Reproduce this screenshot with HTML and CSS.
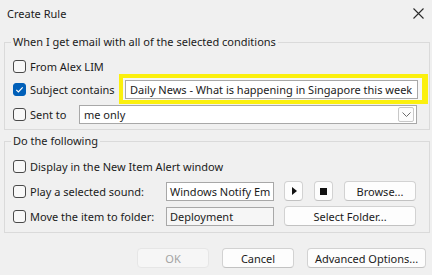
FILE: index.html
```html
<!DOCTYPE html>
<html>

<head>
	<meta charset="utf-8" />
	<title>Create Rule</title>
	<link rel="stylesheet" href="styles.css">
</head>

<body>
	<div class="titlebar">
		<span class="title">Create Rule</span>
		<svg class="close" width="11" height="11" viewBox="0 0 11 11">
			<path d="M0.5 0.5 L10.5 10.5 M10.5 0.5 L0.5 10.5" stroke="#2b2b2b" stroke-width="1.1" fill="none" />
		</svg>
	</div>

	<fieldset class="group group-cond">
		<legend>When I get email with all of the selected conditions</legend>
		<div class="row row-a">
			<label class="check"><span class="box"></span>From Alex LIM</label>
		</div>
		<div class="row row-b">
			<label class="check"><span class="box checked">
				<svg width="13" height="13" viewBox="0 0 13 13"><path d="M3.3 6.8 L5.4 8.9 L9.7 4.4" stroke="#fff" stroke-width="1.2" fill="none" /></svg>
			</span>Subject contains</label>
			<span class="highlight">
				<span class="textbox subject">Daily News - What is happening in Singapore this week</span>
			</span>
		</div>
		<div class="row row-c">
			<label class="check sent"><span class="box"></span>Sent to</label>
			<span class="combo">
				<span class="combo-text">me only</span>
				<span class="combo-btn">
					<svg width="9" height="5" viewBox="0 0 9 5"><path d="M0.5 0.5 L4.5 4.5 L8.5 0.5" stroke="#6b6b6b" stroke-width="1" fill="none" /></svg>
				</span>
			</span>
		</div>
	</fieldset>

	<fieldset class="group group-do">
		<legend>Do the following</legend>
		<div class="row row-a">
			<label class="check"><span class="box"></span>Display in the New Item Alert window</label>
		</div>
		<div class="row row-d">
			<label class="check wide"><span class="box"></span>Play a selected sound:</label>
			<span class="textbox field">Windows Notify Em</span>
			<span class="button small"><span class="play"></span></span>
			<span class="button small"><span class="stop"></span></span>
			<span class="button browse">Browse...</span>
		</div>
		<div class="row row-e">
			<label class="check wide"><span class="box"></span>Move the item to folder:</label>
			<span class="textbox field readonly">Deployment</span>
			<span class="button folder">Select Folder...</span>
		</div>
	</fieldset>

	<div class="footer">
		<span class="button footbtn disabled">OK</span>
		<span class="button footbtn">Cancel</span>
		<span class="button advanced">Advanced Options...</span>
	</div>
</body>

</html>
```

FILE: styles.css
```css
body {
	margin: 0;
	width: 432px;
	height: 275px;
	overflow: hidden;
	background: #f0f0f0;
	color: #1b1b1b;
	font-family: "Noto Sans", "Open Sans", sans-serif;
	font-size: 11px;
}

.titlebar {
	height: 26px;
	display: flex;
	align-items: center;
	justify-content: space-between;
	padding: 0 8px 0 7px;
}

.title {
	font-size: 11px;
}

.close {
	display: block;
	margin-top: 1px;
}

/* group boxes */

.group {
	box-sizing: border-box;
	width: 426px;
	margin: 0 0 0 4px;
	padding: 0 0 4px 8px;
	border: 1px solid #dadada;
	min-width: 0;
}

.group-cond {
	margin-top: 8px;
	padding-top: 5px;
}

.group-do {
	margin-top: 3px;
	padding-top: 6px;
}

.group legend {
	margin-left: -2px;
	padding: 0 2px;
	line-height: 16px;
}

.row {
	display: flex;
	align-items: center;
	height: 22px;
}

.row-b {
	height: 24px;
}

.row-c {
	margin-top: 2px;
}

.row-d {
	margin-top: 2px;
	height: 24px;
}

.row-e {
	margin-top: 1px;
	height: 24px;
}

/* checkboxes */

.check {
	display: flex;
	align-items: center;
	gap: 4px;
	white-space: nowrap;
}

.check.sent {
	width: 66px;
}

.check.wide {
	width: 153px;
}

.row-b .check {
	width: 106px;
}

.box {
	box-sizing: border-box;
	display: block;
	width: 13px;
	height: 13px;
	border: 1px solid #4a4a4a;
	border-radius: 3px;
	background: #f8f8f8;
}

.box.checked {
	border-color: #005fb8;
	background: #005fb8;
}

.box.checked svg {
	display: block;
	margin: -1px;
}

/* text fields */

.highlight {
	box-sizing: border-box;
	display: flex;
	width: 309px;
	height: 30px;
	margin: -3px 0;
	padding: 2px 4px 1px 2px;
	border: 4px solid #fbf00e;
	border-right-width: 6px;
	background: #f7f7f7;
}

.textbox {
	box-sizing: border-box;
	display: block;
	height: 19px;
	line-height: 17px;
	padding: 0 4px;
	border: 1px solid #a8a8a8;
	background: #fff;
	white-space: nowrap;
	overflow: hidden;
}

.subject {
	width: 293px;
}

.field {
	width: 108px;
	padding-left: 3px;
}

.readonly {
	background: #f6f6f6;
}

.combo {
	box-sizing: border-box;
	display: flex;
	align-items: center;
	justify-content: space-between;
	width: 338px;
	height: 19px;
	padding: 0 2px 0 4px;
	border: 1px solid #a8a8a8;
	background: #fff;
}

.combo-btn {
	box-sizing: border-box;
	display: flex;
	align-items: center;
	justify-content: center;
	width: 16px;
	height: 15px;
	border: 1px solid #c8c8c8;
	border-radius: 2px;
	background: #fcfcfc;
}

.combo-btn svg {
	display: block;
}

/* buttons */

.button {
	box-sizing: border-box;
	display: flex;
	align-items: center;
	justify-content: center;
	height: 20px;
	border: 1px solid #d2d2d2;
	border-bottom-color: #c2c2c2;
	border-radius: 4px;
	background: #fdfdfd;
	white-space: nowrap;
}

.button.small {
	width: 19px;
	margin-left: 10px;
}

.button.small + .button.small {
	margin-left: 11px;
}

.browse {
	width: 72px;
	margin-left: 11px;
}

.folder {
	width: 132px;
	margin-left: 10px;
}

.play {
	width: 0;
	height: 0;
	border-top: 4px solid transparent;
	border-bottom: 4px solid transparent;
	border-left: 5px solid #111;
	margin-left: 1px;
}

.stop {
	width: 7px;
	height: 7px;
	background: #111;
}

.footer {
	display: flex;
	justify-content: flex-end;
	gap: 13px;
	margin-top: 15px;
	padding-right: 6px;
}

.footbtn {
	width: 72px;
}

.advanced {
	width: 119px;
}

.disabled {
	color: #a3a3a3;
	background: #f6f6f6;
	border-color: #e6e6e6;
}
```
